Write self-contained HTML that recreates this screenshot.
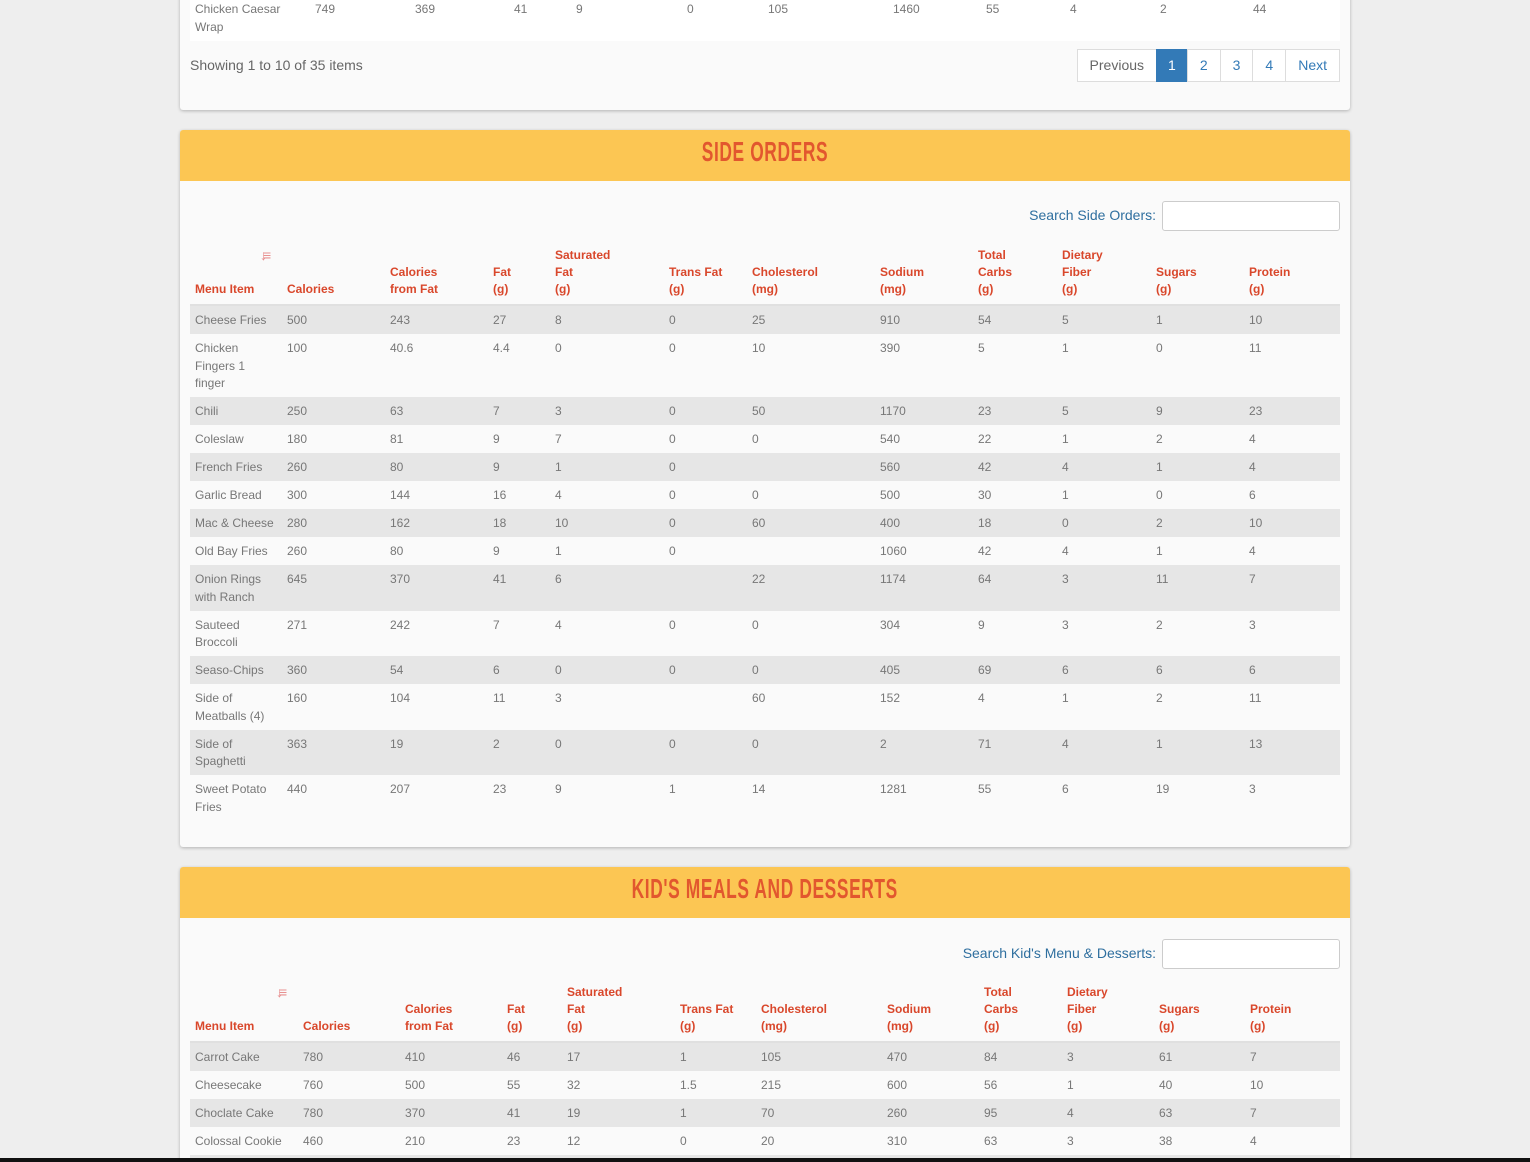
<!DOCTYPE html>
<html><head><meta charset="utf-8"><style>
*{box-sizing:border-box;margin:0;padding:0}
html,body{width:1530px;height:1162px;overflow:hidden}
body{background:#eeeeee;font-family:"Liberation Sans",sans-serif;position:relative}
.card{position:absolute;left:180px;width:1170px;background:#fafafa;border-radius:3px;box-shadow:0 1px 3px rgba(0,0,0,.25);overflow:hidden}
.hdr{height:51px;background:#fcc653;text-align:center;color:#e2572e;font-weight:bold;font-size:28px;letter-spacing:1px;line-height:44px;padding-top:0}
.hdr span{display:inline-block;transform:scaleX(0.62)}
table{border-collapse:collapse;table-layout:fixed;position:absolute;left:10px;font-size:12px}
td{padding:6px 5px 4.5px;line-height:17.5px;color:#777;vertical-align:top}
th{padding:0 5px 6px;line-height:17px;color:#d9472b;text-align:left;vertical-align:bottom;font-weight:bold;border-bottom:2px solid #e0e0e0;position:relative}
tr.s td{background:#e6e6e6}
tbody tr{height:28px}
.search{position:absolute;right:10px;font-size:14px;color:#2f6f9f}
.search span{position:absolute;right:184px;top:6px;white-space:nowrap}
.search i{display:block;width:178px;height:30px;border:1px solid #ccc;border-radius:3px;background:#fff}
.sort{position:absolute;top:3px;font-size:14px;color:#e89090;font-weight:bold;letter-spacing:-4px}
.pag{position:absolute;right:10px;display:flex;font-size:14px}
.pag div{height:33px;line-height:31px;padding:0 12px;border:1px solid #ddd;margin-left:-1px;background:#fff;color:#337ab7}
</style></head><body>

<div class="card" style="top:-10px;height:120px;">
<table style="top:0;width:1150px">
<colgroup><col style="width:120px"><col style="width:100px"><col style="width:99px"><col style="width:62px"><col style="width:111px"><col style="width:81px"><col style="width:125px"><col style="width:93px"><col style="width:84px"><col style="width:90px"><col style="width:93px"><col></colgroup>
<tr style="background:#fff"><td style="padding-top:11px">Chicken Caesar Wrap</td><td style="padding-top:11px">749</td><td style="padding-top:11px">369</td><td style="padding-top:11px">41</td><td style="padding-top:11px">9</td><td style="padding-top:11px">0</td><td style="padding-top:11px">105</td><td style="padding-top:11px">1460</td><td style="padding-top:11px">55</td><td style="padding-top:11px">4</td><td style="padding-top:11px">2</td><td style="padding-top:11px">44</td></tr>
</table>
<div style="position:absolute;left:10px;top:67px;font-size:14px;color:#666">Showing 1 to 10 of 35 items</div>
<div class="pag" style="top:59px"><div style="color:#666">Previous</div><div style="background:#337ab7;border-color:#337ab7;color:#fff;padding:0 11px">1</div><div>2</div><div>3</div><div>4</div><div>Next</div></div>
</div>

<div class="card" style="top:130px;height:717px;">
<div class="hdr"><span>SIDE ORDERS</span></div>
<div class="search" style="top:71px"><span>Search Side Orders:</span><i></i></div>
<table style="top:114px;width:1150px">
<colgroup><col style="width:92px"><col style="width:103px"><col style="width:103px"><col style="width:62px"><col style="width:114px"><col style="width:83px"><col style="width:128px"><col style="width:98px"><col style="width:84px"><col style="width:94px"><col style="width:93px"><col style="width:96px"></colgroup>
<thead><tr style="height:61px"><th>Menu Item<span class="sort" style="left:70px">↓≡</span></th><th>Calories</th><th>Calories<br>from Fat</th><th>Fat<br>(g)</th><th>Saturated<br>Fat<br>(g)</th><th>Trans Fat<br>(g)</th><th>Cholesterol<br>(mg)</th><th>Sodium<br>(mg)</th><th>Total<br>Carbs<br>(g)</th><th>Dietary<br>Fiber<br>(g)</th><th>Sugars<br>(g)</th><th>Protein<br>(g)</th></tr></thead>
<tbody>
<tr class="s"><td>Cheese Fries</td><td>500</td><td>243</td><td>27</td><td>8</td><td>0</td><td>25</td><td>910</td><td>54</td><td>5</td><td>1</td><td>10</td></tr>
<tr><td>Chicken Fingers 1 finger</td><td>100</td><td>40.6</td><td>4.4</td><td>0</td><td>0</td><td>10</td><td>390</td><td>5</td><td>1</td><td>0</td><td>11</td></tr>
<tr class="s"><td>Chili</td><td>250</td><td>63</td><td>7</td><td>3</td><td>0</td><td>50</td><td>1170</td><td>23</td><td>5</td><td>9</td><td>23</td></tr>
<tr><td>Coleslaw</td><td>180</td><td>81</td><td>9</td><td>7</td><td>0</td><td>0</td><td>540</td><td>22</td><td>1</td><td>2</td><td>4</td></tr>
<tr class="s"><td>French Fries</td><td>260</td><td>80</td><td>9</td><td>1</td><td>0</td><td></td><td>560</td><td>42</td><td>4</td><td>1</td><td>4</td></tr>
<tr><td>Garlic Bread</td><td>300</td><td>144</td><td>16</td><td>4</td><td>0</td><td>0</td><td>500</td><td>30</td><td>1</td><td>0</td><td>6</td></tr>
<tr class="s"><td>Mac &amp; Cheese</td><td>280</td><td>162</td><td>18</td><td>10</td><td>0</td><td>60</td><td>400</td><td>18</td><td>0</td><td>2</td><td>10</td></tr>
<tr><td>Old Bay Fries</td><td>260</td><td>80</td><td>9</td><td>1</td><td>0</td><td></td><td>1060</td><td>42</td><td>4</td><td>1</td><td>4</td></tr>
<tr class="s"><td>Onion Rings with Ranch</td><td>645</td><td>370</td><td>41</td><td>6</td><td></td><td>22</td><td>1174</td><td>64</td><td>3</td><td>11</td><td>7</td></tr>
<tr><td>Sauteed Broccoli</td><td>271</td><td>242</td><td>7</td><td>4</td><td>0</td><td>0</td><td>304</td><td>9</td><td>3</td><td>2</td><td>3</td></tr>
<tr class="s"><td>Seaso-Chips</td><td>360</td><td>54</td><td>6</td><td>0</td><td>0</td><td>0</td><td>405</td><td>69</td><td>6</td><td>6</td><td>6</td></tr>
<tr><td>Side of Meatballs (4)</td><td>160</td><td>104</td><td>11</td><td>3</td><td></td><td>60</td><td>152</td><td>4</td><td>1</td><td>2</td><td>11</td></tr>
<tr class="s"><td>Side of Spaghetti</td><td>363</td><td>19</td><td>2</td><td>0</td><td>0</td><td>0</td><td>2</td><td>71</td><td>4</td><td>1</td><td>13</td></tr>
<tr><td>Sweet Potato Fries</td><td>440</td><td>207</td><td>23</td><td>9</td><td>1</td><td>14</td><td>1281</td><td>55</td><td>6</td><td>19</td><td>3</td></tr>
</tbody></table>
</div>

<div class="card" style="top:867px;height:320px;">
<div class="hdr"><span>KID'S MEALS AND DESSERTS</span></div>
<div class="search" style="top:72px"><span>Search Kid's Menu &amp; Desserts:</span><i></i></div>
<table style="top:114px;width:1150px">
<colgroup><col style="width:108px"><col style="width:102px"><col style="width:102px"><col style="width:60px"><col style="width:113px"><col style="width:81px"><col style="width:126px"><col style="width:97px"><col style="width:83px"><col style="width:92px"><col style="width:91px"><col style="width:95px"></colgroup>
<thead><tr style="height:61px"><th>Menu Item<span class="sort" style="left:86px">↓≡</span></th><th>Calories</th><th>Calories<br>from Fat</th><th>Fat<br>(g)</th><th>Saturated<br>Fat<br>(g)</th><th>Trans Fat<br>(g)</th><th>Cholesterol<br>(mg)</th><th>Sodium<br>(mg)</th><th>Total<br>Carbs<br>(g)</th><th>Dietary<br>Fiber<br>(g)</th><th>Sugars<br>(g)</th><th>Protein<br>(g)</th></tr></thead>
<tbody>
<tr class="s"><td>Carrot Cake</td><td>780</td><td>410</td><td>46</td><td>17</td><td>1</td><td>105</td><td>470</td><td>84</td><td>3</td><td>61</td><td>7</td></tr>
<tr><td>Cheesecake</td><td>760</td><td>500</td><td>55</td><td>32</td><td>1.5</td><td>215</td><td>600</td><td>56</td><td>1</td><td>40</td><td>10</td></tr>
<tr class="s"><td>Choclate Cake</td><td>780</td><td>370</td><td>41</td><td>19</td><td>1</td><td>70</td><td>260</td><td>95</td><td>4</td><td>63</td><td>7</td></tr>
<tr><td>Colossal Cookie</td><td>460</td><td>210</td><td>23</td><td>12</td><td>0</td><td>20</td><td>310</td><td>63</td><td>3</td><td>38</td><td>4</td></tr>
<tr class="s"><td>&nbsp;</td><td></td><td></td><td></td><td></td><td></td><td></td><td></td><td></td><td></td><td></td><td></td></tr>
</tbody></table>
</div>
<div style="position:absolute;left:0;top:1158px;width:1530px;height:4px;background:#111"></div>
</body></html>
